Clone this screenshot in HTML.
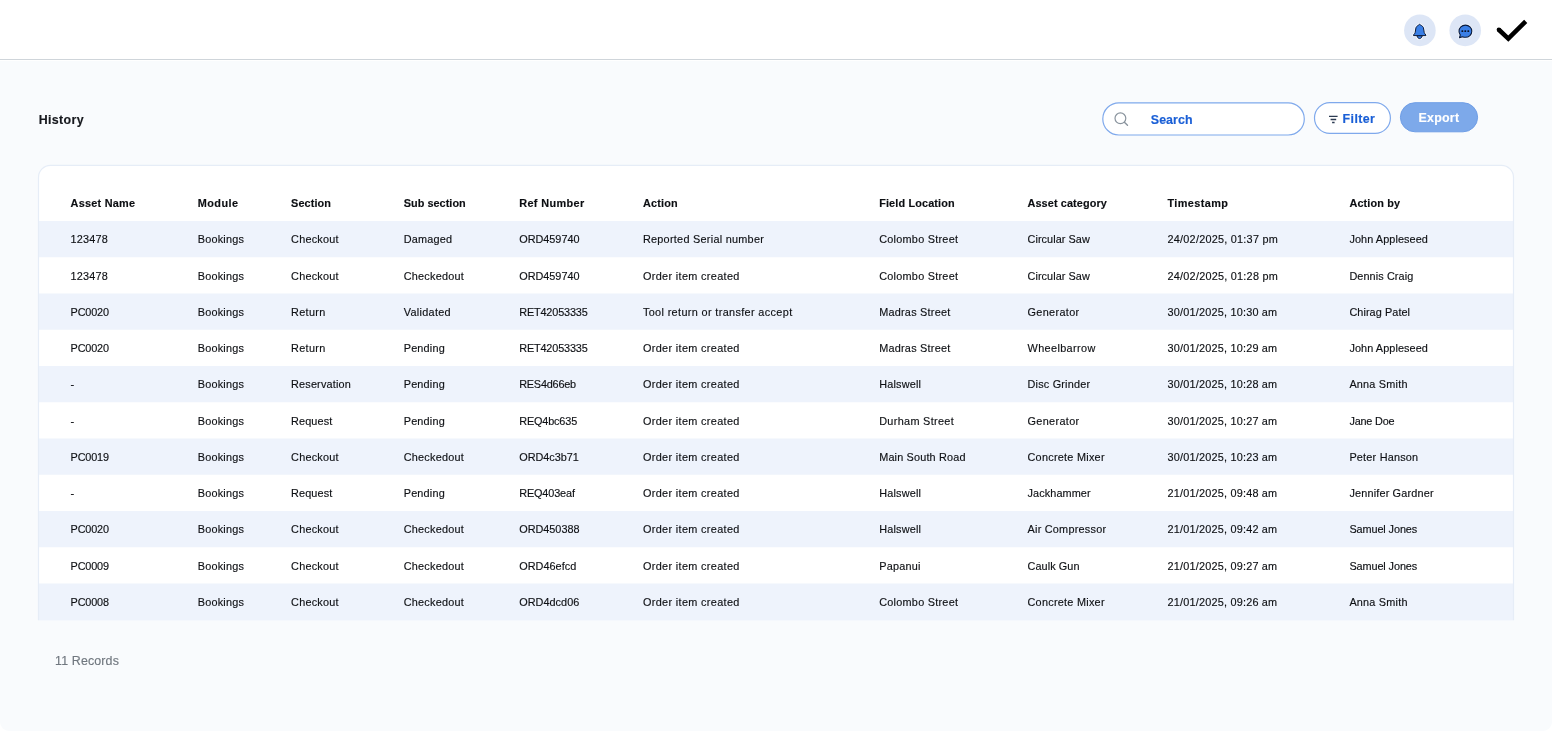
<!DOCTYPE html>
<html lang="en"><head><meta charset="utf-8"><title>History</title>
<style>
html,body{margin:0;padding:0;background:#fff;}
body{width:1552px;height:731px;position:relative;overflow:hidden;font-family:"Liberation Sans",sans-serif;}
.hdr{position:absolute;left:0;top:0;width:1552px;height:59px;background:#fff;border-bottom:1px solid #cfd5da;}
.main{position:absolute;left:0;top:60.6px;width:1552px;height:670.4px;background:#f9fbfd;border-radius:0 0 9px 9px;}
.txt{position:absolute;left:0;top:0;width:1552px;height:731px;will-change:transform;}
.t{position:absolute;white-space:nowrap;line-height:20px;height:20px;-webkit-text-stroke:0.15px currentColor;}
svg{position:absolute;overflow:visible;}
</style></head><body>
<div class="hdr"></div>
<div class="main"></div>
<svg style="left:0;top:0" width="1552" height="731" viewBox="0 0 1552 731">
<path d="M38.5 620.4 V177.4 A12 12 0 0 1 50.5 165.4 H1501.5 A12 12 0 0 1 1513.5 177.4 V620.4 Z" fill="#fff"/>
<g fill="#eef3fc">
<rect x="38.5" y="221.00" width="1475" height="36.25"/>
<rect x="38.5" y="293.50" width="1475" height="36.25"/>
<rect x="38.5" y="366.00" width="1475" height="36.25"/>
<rect x="38.5" y="438.50" width="1475" height="36.25"/>
<rect x="38.5" y="511.00" width="1475" height="36.25"/>
<rect x="38.5" y="583.50" width="1475" height="37.00"/>
</g>
<path d="M38.5 620.3 V177.4 A12 12 0 0 1 50.5 165.4 H1501.5 A12 12 0 0 1 1513.5 177.4 V620.3" fill="none" stroke="#e6edf7" stroke-width="1.2"/>
<rect x="1102.8" y="102.8" width="201.5" height="32.2" rx="16.1" fill="#fff" stroke="#7fa9ec" stroke-width="1.2"/>
<rect x="1314.5" y="102.7" width="75.9" height="30.7" rx="15.35" fill="#fff" stroke="#7fa9ec" stroke-width="1.2"/>
<rect x="1400.4" y="102.7" width="77.2" height="29.1" rx="14.55" fill="#7da9ea" stroke="#6f9ee6" stroke-width="1"/>
<circle cx="1419.9" cy="30.4" r="15.8" fill="#dde6f6"/>
<circle cx="1465.2" cy="30.4" r="15.8" fill="#dde6f6"/>
<g stroke-linejoin="round">
<path d="M1419.6 24.3 C1418.5 25.3 1416.6 26.0 1416.0 27.6 C1415.5 29.0 1415.6 31.0 1415.2 32.4 C1415.0 33.4 1414.2 34.2 1413.5 35.0 L1413.5 35.6 L1425.9 35.6 L1425.9 35.0 C1425.2 34.2 1424.4 33.4 1424.2 32.4 C1423.8 31.0 1423.9 29.0 1423.4 27.6 C1422.8 26.0 1420.7 25.3 1419.6 24.3 Z M1417.0 35.8 C1417.3 37.5 1418.5 38.6 1419.6 38.6 C1420.7 38.6 1421.9 37.5 1422.2 35.8 Z" fill="none" stroke="#f3f7fd" stroke-width="2.6"/>
<path d="M1419.6 24.3 C1418.5 25.3 1416.6 26.0 1416.0 27.6 C1415.5 29.0 1415.6 31.0 1415.2 32.4 C1415.0 33.4 1414.2 34.2 1413.5 35.0 L1413.5 35.6 L1425.9 35.6 L1425.9 35.0 C1425.2 34.2 1424.4 33.4 1424.2 32.4 C1423.8 31.0 1423.9 29.0 1423.4 27.6 C1422.8 26.0 1420.7 25.3 1419.6 24.3 Z" fill="#3a7fe6" stroke="#0b1a3a" stroke-width="1"/>
<path d="M1417.0 35.8 C1417.3 37.5 1418.5 38.6 1419.6 38.6 C1420.7 38.6 1421.9 37.5 1422.2 35.8 Z" fill="#3a7fe6" stroke="#0b1a3a" stroke-width="1"/>
<g transform="translate(0,0.6)">
<path d="M1465.4 24.5 C1461.8 24.5 1459.0 27.2 1459.0 30.6 C1459.0 32.0 1459.5 33.3 1460.3 34.3 L1459.5 37.0 L1462.6 36.1 C1463.4 36.5 1464.4 36.7 1465.4 36.7 C1469.0 36.7 1471.8 34.0 1471.8 30.6 C1471.8 27.2 1469.0 24.5 1465.4 24.5 Z" fill="none" stroke="#f3f7fd" stroke-width="2.6"/>
<path d="M1465.4 24.5 C1461.8 24.5 1459.0 27.2 1459.0 30.6 C1459.0 32.0 1459.5 33.3 1460.3 34.3 L1459.5 37.0 L1462.6 36.1 C1463.4 36.5 1464.4 36.7 1465.4 36.7 C1469.0 36.7 1471.8 34.0 1471.8 30.6 C1471.8 27.2 1469.0 24.5 1465.4 24.5 Z" fill="#3a7fe6" stroke="#0b1a3a" stroke-width="1.1"/>
</g>
</g>
<rect x="1461.45" y="30.3" width="1.8" height="1.8" rx="0.5" fill="#0b1226"/>
<rect x="1464.4" y="30.3" width="1.8" height="1.8" rx="0.5" fill="#0b1226"/>
<rect x="1467.4" y="30.3" width="1.8" height="1.8" rx="0.5" fill="#0b1226"/>
<path d="M1498.9 29.75 L1508.3 38.7 L1525.7 21.3" fill="none" stroke="#000" stroke-width="4.5" stroke-linejoin="miter"/>
<circle cx="1498.9" cy="29.75" r="2.25" fill="#000"/>
<circle cx="1120.4" cy="118.3" r="5.4" fill="none" stroke="#8a949e" stroke-width="1.2"/>
<path d="M1124.4 122.3 L1127.5 125.2" stroke="#8a949e" stroke-width="1.4" stroke-linecap="round"/>
<path d="M1329 116.4 H1337.6 M1330.6 119.5 H1336.2 M1332.1 122.5 H1334.6" stroke="#2c3b52" stroke-width="1.3"/>
</svg>
<div class="txt">
<div class="t" id="h0" style="left:70.60px;top:193.00px;font-size:10.864px;font-weight:700;color:#0c0e12;letter-spacing:0.255px;">Asset Name</div>
<div class="t" id="h1" style="left:197.80px;top:193.00px;font-size:10.864px;font-weight:700;color:#0c0e12;letter-spacing:0.448px;">Module</div>
<div class="t" id="h2" style="left:291.10px;top:193.00px;font-size:10.864px;font-weight:700;color:#0c0e12;letter-spacing:0.092px;">Section</div>
<div class="t" id="h3" style="left:403.70px;top:193.00px;font-size:10.864px;font-weight:700;color:#0c0e12;letter-spacing:0.051px;">Sub section</div>
<div class="t" id="h4" style="left:519.20px;top:193.00px;font-size:10.864px;font-weight:700;color:#0c0e12;letter-spacing:0.392px;">Ref Number</div>
<div class="t" id="h5" style="left:642.90px;top:193.00px;font-size:10.864px;font-weight:700;color:#0c0e12;letter-spacing:0.195px;">Action</div>
<div class="t" id="h6" style="left:879.20px;top:193.00px;font-size:10.864px;font-weight:700;color:#0c0e12;letter-spacing:0.142px;">Field Location</div>
<div class="t" id="h7" style="left:1027.50px;top:193.00px;font-size:10.864px;font-weight:700;color:#0c0e12;letter-spacing:0.115px;">Asset category</div>
<div class="t" id="h8" style="left:1167.50px;top:193.00px;font-size:10.864px;font-weight:700;color:#0c0e12;letter-spacing:0.417px;">Timestamp</div>
<div class="t" id="h9" style="left:1349.40px;top:193.00px;font-size:10.864px;font-weight:700;color:#0c0e12;letter-spacing:0.151px;">Action by</div>
<div class="t" id="r0c0" style="left:70.60px;top:229.00px;font-size:10.864px;font-weight:400;color:#0e1014;letter-spacing:0.169px;">123478</div>
<div class="t" id="r0c1" style="left:197.80px;top:229.00px;font-size:10.864px;font-weight:400;color:#0e1014;letter-spacing:0.197px;">Bookings</div>
<div class="t" id="r0c2" style="left:291.10px;top:229.00px;font-size:10.864px;font-weight:400;color:#0e1014;letter-spacing:0.211px;">Checkout</div>
<div class="t" id="r0c3" style="left:403.70px;top:229.00px;font-size:10.864px;font-weight:400;color:#0e1014;letter-spacing:0.221px;">Damaged</div>
<div class="t" id="r0c4" style="left:519.20px;top:229.00px;font-size:10.864px;font-weight:400;color:#0e1014;letter-spacing:-0.009px;">ORD459740</div>
<div class="t" id="r0c5" style="left:642.90px;top:229.00px;font-size:10.864px;font-weight:400;color:#0e1014;letter-spacing:0.270px;">Reported Serial number</div>
<div class="t" id="r0c6" style="left:879.20px;top:229.00px;font-size:10.864px;font-weight:400;color:#0e1014;letter-spacing:0.256px;">Colombo Street</div>
<div class="t" id="r0c7" style="left:1027.50px;top:229.00px;font-size:10.864px;font-weight:400;color:#0e1014;letter-spacing:0.064px;">Circular Saw</div>
<div class="t" id="r0c8" style="left:1167.50px;top:229.00px;font-size:10.864px;font-weight:400;color:#0e1014;letter-spacing:0.241px;">24/02/2025, 01:37 pm</div>
<div class="t" id="r0c9" style="left:1349.40px;top:229.00px;font-size:10.864px;font-weight:400;color:#0e1014;letter-spacing:0.094px;">John Appleseed</div>
<div class="t" id="r1c0" style="left:70.60px;top:266.00px;font-size:10.864px;font-weight:400;color:#0e1014;letter-spacing:0.169px;">123478</div>
<div class="t" id="r1c1" style="left:197.80px;top:266.00px;font-size:10.864px;font-weight:400;color:#0e1014;letter-spacing:0.197px;">Bookings</div>
<div class="t" id="r1c2" style="left:291.10px;top:266.00px;font-size:10.864px;font-weight:400;color:#0e1014;letter-spacing:0.211px;">Checkout</div>
<div class="t" id="r1c3" style="left:403.70px;top:266.00px;font-size:10.864px;font-weight:400;color:#0e1014;letter-spacing:0.234px;">Checkedout</div>
<div class="t" id="r1c4" style="left:519.20px;top:266.00px;font-size:10.864px;font-weight:400;color:#0e1014;letter-spacing:-0.009px;">ORD459740</div>
<div class="t" id="r1c5" style="left:642.90px;top:266.00px;font-size:10.864px;font-weight:400;color:#0e1014;letter-spacing:0.352px;">Order item created</div>
<div class="t" id="r1c6" style="left:879.20px;top:266.00px;font-size:10.864px;font-weight:400;color:#0e1014;letter-spacing:0.256px;">Colombo Street</div>
<div class="t" id="r1c7" style="left:1027.50px;top:266.00px;font-size:10.864px;font-weight:400;color:#0e1014;letter-spacing:0.064px;">Circular Saw</div>
<div class="t" id="r1c8" style="left:1167.50px;top:266.00px;font-size:10.864px;font-weight:400;color:#0e1014;letter-spacing:0.241px;">24/02/2025, 01:28 pm</div>
<div class="t" id="r1c9" style="left:1349.40px;top:266.00px;font-size:10.864px;font-weight:400;color:#0e1014;letter-spacing:0.102px;">Dennis Craig</div>
<div class="t" id="r2c0" style="left:70.60px;top:302.00px;font-size:10.864px;font-weight:400;color:#0e1014;letter-spacing:-0.172px;">PC0020</div>
<div class="t" id="r2c1" style="left:197.80px;top:302.00px;font-size:10.864px;font-weight:400;color:#0e1014;letter-spacing:0.197px;">Bookings</div>
<div class="t" id="r2c2" style="left:291.10px;top:302.00px;font-size:10.864px;font-weight:400;color:#0e1014;letter-spacing:0.305px;">Return</div>
<div class="t" id="r2c3" style="left:403.70px;top:302.00px;font-size:10.864px;font-weight:400;color:#0e1014;letter-spacing:0.312px;">Validated</div>
<div class="t" id="r2c4" style="left:519.20px;top:302.00px;font-size:10.864px;font-weight:400;color:#0e1014;letter-spacing:-0.149px;">RET42053335</div>
<div class="t" id="r2c5" style="left:642.90px;top:302.00px;font-size:10.864px;font-weight:400;color:#0e1014;letter-spacing:0.360px;">Tool return or transfer accept</div>
<div class="t" id="r2c6" style="left:879.20px;top:302.00px;font-size:10.864px;font-weight:400;color:#0e1014;letter-spacing:0.234px;">Madras Street</div>
<div class="t" id="r2c7" style="left:1027.50px;top:302.00px;font-size:10.864px;font-weight:400;color:#0e1014;letter-spacing:0.352px;">Generator</div>
<div class="t" id="r2c8" style="left:1167.50px;top:302.00px;font-size:10.864px;font-weight:400;color:#0e1014;letter-spacing:0.210px;">30/01/2025, 10:30 am</div>
<div class="t" id="r2c9" style="left:1349.40px;top:302.00px;font-size:10.864px;font-weight:400;color:#0e1014;letter-spacing:0.079px;">Chirag Patel</div>
<div class="t" id="r3c0" style="left:70.60px;top:338.00px;font-size:10.864px;font-weight:400;color:#0e1014;letter-spacing:-0.172px;">PC0020</div>
<div class="t" id="r3c1" style="left:197.80px;top:338.00px;font-size:10.864px;font-weight:400;color:#0e1014;letter-spacing:0.197px;">Bookings</div>
<div class="t" id="r3c2" style="left:291.10px;top:338.00px;font-size:10.864px;font-weight:400;color:#0e1014;letter-spacing:0.305px;">Return</div>
<div class="t" id="r3c3" style="left:403.70px;top:338.00px;font-size:10.864px;font-weight:400;color:#0e1014;letter-spacing:0.196px;">Pending</div>
<div class="t" id="r3c4" style="left:519.20px;top:338.00px;font-size:10.864px;font-weight:400;color:#0e1014;letter-spacing:-0.149px;">RET42053335</div>
<div class="t" id="r3c5" style="left:642.90px;top:338.00px;font-size:10.864px;font-weight:400;color:#0e1014;letter-spacing:0.352px;">Order item created</div>
<div class="t" id="r3c6" style="left:879.20px;top:338.00px;font-size:10.864px;font-weight:400;color:#0e1014;letter-spacing:0.234px;">Madras Street</div>
<div class="t" id="r3c7" style="left:1027.50px;top:338.00px;font-size:10.864px;font-weight:400;color:#0e1014;letter-spacing:0.378px;">Wheelbarrow</div>
<div class="t" id="r3c8" style="left:1167.50px;top:338.00px;font-size:10.864px;font-weight:400;color:#0e1014;letter-spacing:0.210px;">30/01/2025, 10:29 am</div>
<div class="t" id="r3c9" style="left:1349.40px;top:338.00px;font-size:10.864px;font-weight:400;color:#0e1014;letter-spacing:0.094px;">John Appleseed</div>
<div class="t" id="r4c0" style="left:70.60px;top:374.00px;font-size:10.864px;font-weight:400;color:#0e1014;">-</div>
<div class="t" id="r4c1" style="left:197.80px;top:374.00px;font-size:10.864px;font-weight:400;color:#0e1014;letter-spacing:0.197px;">Bookings</div>
<div class="t" id="r4c2" style="left:291.10px;top:374.00px;font-size:10.864px;font-weight:400;color:#0e1014;letter-spacing:0.166px;">Reservation</div>
<div class="t" id="r4c3" style="left:403.70px;top:374.00px;font-size:10.864px;font-weight:400;color:#0e1014;letter-spacing:0.196px;">Pending</div>
<div class="t" id="r4c4" style="left:519.20px;top:374.00px;font-size:10.864px;font-weight:400;color:#0e1014;letter-spacing:-0.207px;">RES4d66eb</div>
<div class="t" id="r4c5" style="left:642.90px;top:374.00px;font-size:10.864px;font-weight:400;color:#0e1014;letter-spacing:0.352px;">Order item created</div>
<div class="t" id="r4c6" style="left:879.20px;top:374.00px;font-size:10.864px;font-weight:400;color:#0e1014;letter-spacing:0.189px;">Halswell</div>
<div class="t" id="r4c7" style="left:1027.50px;top:374.00px;font-size:10.864px;font-weight:400;color:#0e1014;letter-spacing:0.199px;">Disc Grinder</div>
<div class="t" id="r4c8" style="left:1167.50px;top:374.00px;font-size:10.864px;font-weight:400;color:#0e1014;letter-spacing:0.210px;">30/01/2025, 10:28 am</div>
<div class="t" id="r4c9" style="left:1349.40px;top:374.00px;font-size:10.864px;font-weight:400;color:#0e1014;letter-spacing:0.219px;">Anna Smith</div>
<div class="t" id="r5c0" style="left:70.60px;top:411.00px;font-size:10.864px;font-weight:400;color:#0e1014;">-</div>
<div class="t" id="r5c1" style="left:197.80px;top:411.00px;font-size:10.864px;font-weight:400;color:#0e1014;letter-spacing:0.197px;">Bookings</div>
<div class="t" id="r5c2" style="left:291.10px;top:411.00px;font-size:10.864px;font-weight:400;color:#0e1014;letter-spacing:0.114px;">Request</div>
<div class="t" id="r5c3" style="left:403.70px;top:411.00px;font-size:10.864px;font-weight:400;color:#0e1014;letter-spacing:0.196px;">Pending</div>
<div class="t" id="r5c4" style="left:519.20px;top:411.00px;font-size:10.864px;font-weight:400;color:#0e1014;letter-spacing:-0.144px;">REQ4bc635</div>
<div class="t" id="r5c5" style="left:642.90px;top:411.00px;font-size:10.864px;font-weight:400;color:#0e1014;letter-spacing:0.352px;">Order item created</div>
<div class="t" id="r5c6" style="left:879.20px;top:411.00px;font-size:10.864px;font-weight:400;color:#0e1014;letter-spacing:0.328px;">Durham Street</div>
<div class="t" id="r5c7" style="left:1027.50px;top:411.00px;font-size:10.864px;font-weight:400;color:#0e1014;letter-spacing:0.352px;">Generator</div>
<div class="t" id="r5c8" style="left:1167.50px;top:411.00px;font-size:10.864px;font-weight:400;color:#0e1014;letter-spacing:0.210px;">30/01/2025, 10:27 am</div>
<div class="t" id="r5c9" style="left:1349.40px;top:411.00px;font-size:10.864px;font-weight:400;color:#0e1014;letter-spacing:-0.182px;">Jane Doe</div>
<div class="t" id="r6c0" style="left:70.60px;top:447.00px;font-size:10.864px;font-weight:400;color:#0e1014;letter-spacing:-0.172px;">PC0019</div>
<div class="t" id="r6c1" style="left:197.80px;top:447.00px;font-size:10.864px;font-weight:400;color:#0e1014;letter-spacing:0.197px;">Bookings</div>
<div class="t" id="r6c2" style="left:291.10px;top:447.00px;font-size:10.864px;font-weight:400;color:#0e1014;letter-spacing:0.211px;">Checkout</div>
<div class="t" id="r6c3" style="left:403.70px;top:447.00px;font-size:10.864px;font-weight:400;color:#0e1014;letter-spacing:0.234px;">Checkedout</div>
<div class="t" id="r6c4" style="left:519.20px;top:447.00px;font-size:10.864px;font-weight:400;color:#0e1014;letter-spacing:-0.005px;">ORD4c3b71</div>
<div class="t" id="r6c5" style="left:642.90px;top:447.00px;font-size:10.864px;font-weight:400;color:#0e1014;letter-spacing:0.352px;">Order item created</div>
<div class="t" id="r6c6" style="left:879.20px;top:447.00px;font-size:10.864px;font-weight:400;color:#0e1014;letter-spacing:0.168px;">Main South Road</div>
<div class="t" id="r6c7" style="left:1027.50px;top:447.00px;font-size:10.864px;font-weight:400;color:#0e1014;letter-spacing:0.262px;">Concrete Mixer</div>
<div class="t" id="r6c8" style="left:1167.50px;top:447.00px;font-size:10.864px;font-weight:400;color:#0e1014;letter-spacing:0.210px;">30/01/2025, 10:23 am</div>
<div class="t" id="r6c9" style="left:1349.40px;top:447.00px;font-size:10.864px;font-weight:400;color:#0e1014;letter-spacing:0.211px;">Peter Hanson</div>
<div class="t" id="r7c0" style="left:70.60px;top:483.00px;font-size:10.864px;font-weight:400;color:#0e1014;">-</div>
<div class="t" id="r7c1" style="left:197.80px;top:483.00px;font-size:10.864px;font-weight:400;color:#0e1014;letter-spacing:0.197px;">Bookings</div>
<div class="t" id="r7c2" style="left:291.10px;top:483.00px;font-size:10.864px;font-weight:400;color:#0e1014;letter-spacing:0.114px;">Request</div>
<div class="t" id="r7c3" style="left:403.70px;top:483.00px;font-size:10.864px;font-weight:400;color:#0e1014;letter-spacing:0.196px;">Pending</div>
<div class="t" id="r7c4" style="left:519.20px;top:483.00px;font-size:10.864px;font-weight:400;color:#0e1014;letter-spacing:-0.127px;">REQ403eaf</div>
<div class="t" id="r7c5" style="left:642.90px;top:483.00px;font-size:10.864px;font-weight:400;color:#0e1014;letter-spacing:0.352px;">Order item created</div>
<div class="t" id="r7c6" style="left:879.20px;top:483.00px;font-size:10.864px;font-weight:400;color:#0e1014;letter-spacing:0.189px;">Halswell</div>
<div class="t" id="r7c7" style="left:1027.50px;top:483.00px;font-size:10.864px;font-weight:400;color:#0e1014;letter-spacing:0.105px;">Jackhammer</div>
<div class="t" id="r7c8" style="left:1167.50px;top:483.00px;font-size:10.864px;font-weight:400;color:#0e1014;letter-spacing:0.210px;">21/01/2025, 09:48 am</div>
<div class="t" id="r7c9" style="left:1349.40px;top:483.00px;font-size:10.864px;font-weight:400;color:#0e1014;letter-spacing:0.175px;">Jennifer Gardner</div>
<div class="t" id="r8c0" style="left:70.60px;top:519.00px;font-size:10.864px;font-weight:400;color:#0e1014;letter-spacing:-0.172px;">PC0020</div>
<div class="t" id="r8c1" style="left:197.80px;top:519.00px;font-size:10.864px;font-weight:400;color:#0e1014;letter-spacing:0.197px;">Bookings</div>
<div class="t" id="r8c2" style="left:291.10px;top:519.00px;font-size:10.864px;font-weight:400;color:#0e1014;letter-spacing:0.211px;">Checkout</div>
<div class="t" id="r8c3" style="left:403.70px;top:519.00px;font-size:10.864px;font-weight:400;color:#0e1014;letter-spacing:0.234px;">Checkedout</div>
<div class="t" id="r8c4" style="left:519.20px;top:519.00px;font-size:10.864px;font-weight:400;color:#0e1014;letter-spacing:-0.009px;">ORD450388</div>
<div class="t" id="r8c5" style="left:642.90px;top:519.00px;font-size:10.864px;font-weight:400;color:#0e1014;letter-spacing:0.352px;">Order item created</div>
<div class="t" id="r8c6" style="left:879.20px;top:519.00px;font-size:10.864px;font-weight:400;color:#0e1014;letter-spacing:0.189px;">Halswell</div>
<div class="t" id="r8c7" style="left:1027.50px;top:519.00px;font-size:10.864px;font-weight:400;color:#0e1014;letter-spacing:0.240px;">Air Compressor</div>
<div class="t" id="r8c8" style="left:1167.50px;top:519.00px;font-size:10.864px;font-weight:400;color:#0e1014;letter-spacing:0.210px;">21/01/2025, 09:42 am</div>
<div class="t" id="r8c9" style="left:1349.40px;top:519.00px;font-size:10.864px;font-weight:400;color:#0e1014;letter-spacing:-0.090px;">Samuel Jones</div>
<div class="t" id="r9c0" style="left:70.60px;top:556.00px;font-size:10.864px;font-weight:400;color:#0e1014;letter-spacing:-0.172px;">PC0009</div>
<div class="t" id="r9c1" style="left:197.80px;top:556.00px;font-size:10.864px;font-weight:400;color:#0e1014;letter-spacing:0.197px;">Bookings</div>
<div class="t" id="r9c2" style="left:291.10px;top:556.00px;font-size:10.864px;font-weight:400;color:#0e1014;letter-spacing:0.211px;">Checkout</div>
<div class="t" id="r9c3" style="left:403.70px;top:556.00px;font-size:10.864px;font-weight:400;color:#0e1014;letter-spacing:0.234px;">Checkedout</div>
<div class="t" id="r9c4" style="left:519.20px;top:556.00px;font-size:10.864px;font-weight:400;color:#0e1014;letter-spacing:0.033px;">ORD46efcd</div>
<div class="t" id="r9c5" style="left:642.90px;top:556.00px;font-size:10.864px;font-weight:400;color:#0e1014;letter-spacing:0.352px;">Order item created</div>
<div class="t" id="r9c6" style="left:879.20px;top:556.00px;font-size:10.864px;font-weight:400;color:#0e1014;letter-spacing:0.208px;">Papanui</div>
<div class="t" id="r9c7" style="left:1027.50px;top:556.00px;font-size:10.864px;font-weight:400;color:#0e1014;letter-spacing:0.080px;">Caulk Gun</div>
<div class="t" id="r9c8" style="left:1167.50px;top:556.00px;font-size:10.864px;font-weight:400;color:#0e1014;letter-spacing:0.210px;">21/01/2025, 09:27 am</div>
<div class="t" id="r9c9" style="left:1349.40px;top:556.00px;font-size:10.864px;font-weight:400;color:#0e1014;letter-spacing:-0.090px;">Samuel Jones</div>
<div class="t" id="r10c0" style="left:70.60px;top:592.00px;font-size:10.864px;font-weight:400;color:#0e1014;letter-spacing:-0.172px;">PC0008</div>
<div class="t" id="r10c1" style="left:197.80px;top:592.00px;font-size:10.864px;font-weight:400;color:#0e1014;letter-spacing:0.197px;">Bookings</div>
<div class="t" id="r10c2" style="left:291.10px;top:592.00px;font-size:10.864px;font-weight:400;color:#0e1014;letter-spacing:0.211px;">Checkout</div>
<div class="t" id="r10c3" style="left:403.70px;top:592.00px;font-size:10.864px;font-weight:400;color:#0e1014;letter-spacing:0.234px;">Checkedout</div>
<div class="t" id="r10c4" style="left:519.20px;top:592.00px;font-size:10.864px;font-weight:400;color:#0e1014;letter-spacing:0.043px;">ORD4dcd06</div>
<div class="t" id="r10c5" style="left:642.90px;top:592.00px;font-size:10.864px;font-weight:400;color:#0e1014;letter-spacing:0.352px;">Order item created</div>
<div class="t" id="r10c6" style="left:879.20px;top:592.00px;font-size:10.864px;font-weight:400;color:#0e1014;letter-spacing:0.256px;">Colombo Street</div>
<div class="t" id="r10c7" style="left:1027.50px;top:592.00px;font-size:10.864px;font-weight:400;color:#0e1014;letter-spacing:0.262px;">Concrete Mixer</div>
<div class="t" id="r10c8" style="left:1167.50px;top:592.00px;font-size:10.864px;font-weight:400;color:#0e1014;letter-spacing:0.210px;">21/01/2025, 09:26 am</div>
<div class="t" id="r10c9" style="left:1349.40px;top:592.00px;font-size:10.864px;font-weight:400;color:#0e1014;letter-spacing:0.219px;">Anna Smith</div>
<div class="t" id="history" style="left:38.70px;top:110.00px;font-size:12.416px;font-weight:700;color:#16181d;letter-spacing:0.350px;">History</div>
<div class="t" id="search" style="left:1150.80px;top:110.00px;font-size:12.416px;font-weight:700;color:#1a5fd6;letter-spacing:0.073px;">Search</div>
<div class="t" id="filter" style="left:1342.60px;top:109.00px;font-size:12.416px;font-weight:700;color:#1a5fd6;letter-spacing:0.398px;">Filter</div>
<div class="t" id="export" style="left:1418.60px;top:108.00px;font-size:12.416px;font-weight:700;color:#ffffff;letter-spacing:0.229px;">Export</div>
<div class="t" id="records" style="left:55.00px;top:651.00px;font-size:12.416px;font-weight:400;color:#70777f;letter-spacing:0.148px;">11 Records</div>
</div>
</body></html>
